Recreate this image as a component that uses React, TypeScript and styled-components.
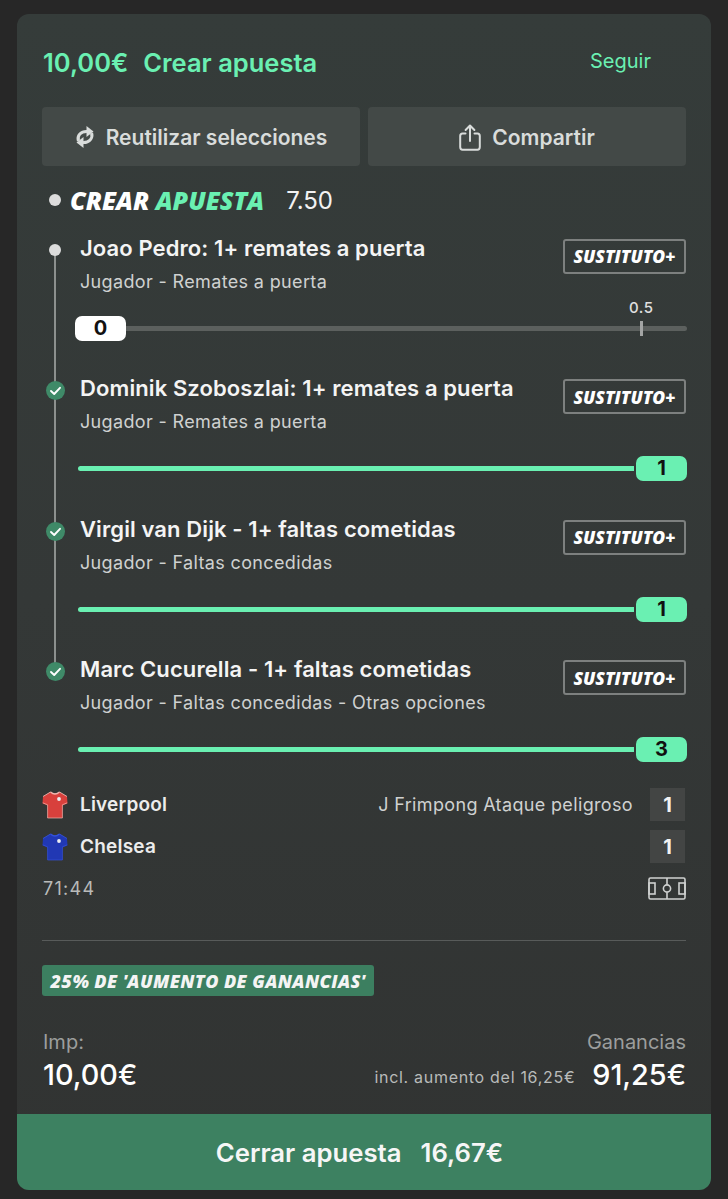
import styled, { createGlobalStyle } from 'styled-components';

const mint = '#6af0b2';
const brandFont = '"Open Sans", Lato, sans-serif';

const legs = [
  { title: 'Joao Pedro: 1+ remates a puerta', sub: 'Jugador - Remates a puerta', value: 0, pending: true },
  { title: 'Dominik Szoboszlai: 1+ remates a puerta', sub: 'Jugador - Remates a puerta', value: 1 },
  { title: 'Virgil van Dijk - 1+ faltas cometidas', sub: 'Jugador - Faltas concedidas', value: 1 },
  { title: 'Marc Cucurella - 1+ faltas cometidas', sub: 'Jugador - Faltas concedidas - Otras opciones', value: 3 },
];

const Shirt = ({ body, trim }: { body: string; trim: string }) => (
  <svg width="26" height="28" viewBox="0 0 26 28">
    <path
      d="M8.5 1 L1 5.5 L0.5 12.5 L5.5 14.5 L5.5 27 L20.5 27 L20.5 14.5 L25.5 12.5 L25 5.5 L17.5 1 Q13 3.5 8.5 1 Z"
      fill={body}
    />
    <path d="M8.5 1 Q13 5 17.5 1" fill="none" stroke={trim} strokeWidth="1.4" />
    <path d="M0.8 11.8 L5.6 13.8 M25.2 11.8 L20.4 13.8 M5.6 13.8 V27 H20.4 V13.8" fill="none" stroke={trim} strokeWidth="0.7" />
    <path d="M8.5 1 L1 5.5 M17.5 1 L25 5.5" fill="none" stroke={trim} strokeWidth="0.9" />
    <circle cx="17" cy="8" r="1.9" fill="#eceef2" />
  </svg>
);

const Check = () => (
  <svg width="19" height="19" viewBox="0 0 19 19">
    <circle cx="9.5" cy="9.5" r="9.5" fill="#3f8a68" />
    <path d="M5 10 L8.2 13 L14 6.8" fill="none" stroke="#fff" strokeWidth="1.9" strokeLinecap="round" strokeLinejoin="round" />
  </svg>
);

const SyncIcon = () => (
  <svg width="20" height="24" viewBox="0 0 20 24" fill="#d9dcdb">
    <path d="M3.4 16 C1.8 10.5 6 6.2 12 6.5" fill="none" stroke="#d9dcdb" strokeWidth="3" />
    <path d="M11.5 1 L18.5 6.6 L11.5 12 Z" />
    <g transform="rotate(180 10 12)">
      <path d="M3.4 16 C1.8 10.5 6 6.2 12 6.5" fill="none" stroke="#d9dcdb" strokeWidth="3" />
      <path d="M11.5 1 L18.5 6.6 L11.5 12 Z" />
    </g>
  </svg>
);

const ShareIcon = () => (
  <svg width="22" height="27" viewBox="0 0 22 27" fill="none" stroke="#d9dcdb" strokeWidth="2" strokeLinecap="round" strokeLinejoin="round">
    <path d="M6.5 9.5 H3.5 Q1.2 9.5 1.2 12 V23 Q1.2 25.7 3.5 25.7 H18.5 Q20.8 25.7 20.8 23 V12 Q20.8 9.5 18.5 9.5 H15.5" />
    <path d="M11 17 V1.8 M6.6 6 L11 1.5 L15.4 6" />
  </svg>
);

const PitchIcon = () => (
  <svg width="38" height="23" viewBox="0 0 38 23" fill="none" stroke="#cfd1d0" strokeWidth="1.6">
    <rect x="1" y="1" width="36" height="21" rx="1.5" />
    <path d="M19 1 V7.5 M19 15.5 V22" />
    <circle cx="19" cy="11.5" r="3.6" />
    <rect x="1" y="6" width="6" height="11" />
    <rect x="31" y="6" width="6" height="11" />
  </svg>
);

const App = () => {
  return (
    <>
      <GlobalStyle />
      <Card>
        <Header>
          <HeaderTitle>
            <span>10,00€</span>
            <span>Crear apuesta</span>
          </HeaderTitle>
          <FollowLink>Seguir</FollowLink>
        </Header>

        <ActionRow>
          <ActionButton>
            <SyncIcon />
            Reutilizar selecciones
          </ActionButton>
          <ActionButton>
            <ShareIcon />
            Compartir
          </ActionButton>
        </ActionRow>

        <BetTitleRow>
          <BetDot />
          <BetBrand>
            CREAR <em>APUESTA</em>
          </BetBrand>
          <BetOdds>7.50</BetOdds>
        </BetTitleRow>

        <LegList>
          {legs.map((leg, i) => (
            <Leg key={leg.title}>
              <Rail $first={i === 0} $last={i === legs.length - 1}>
                <RailMark>{leg.pending ? <PendingDot /> : <Check />}</RailMark>
              </Rail>
              <LegBody>
                <LegTop>
                  <div>
                    <LegTitle>{leg.title}</LegTitle>
                    <LegSub>{leg.sub}</LegSub>
                  </div>
                  <SubButton>SUSTITUTO+</SubButton>
                </LegTop>
                {leg.pending ? (
                  <Slider>
                    <WhiteThumb>{leg.value}</WhiteThumb>
                    <GreyTrack>
                      <TickLabel>0.5</TickLabel>
                      <Tick />
                    </GreyTrack>
                  </Slider>
                ) : (
                  <Slider $filled>
                    <MintTrack />
                    <MintThumb>{leg.value}</MintThumb>
                  </Slider>
                )}
              </LegBody>
            </Leg>
          ))}
        </LegList>

        <Score>
          <TeamRow>
            <Shirt body="#d8403c" trim="#eeb4ae" />
            <TeamName>Liverpool</TeamName>
            <Stat>J Frimpong Ataque peligroso</Stat>
            <ScoreBox>1</ScoreBox>
          </TeamRow>
          <TeamRow>
            <Shirt body="#2138b4" trim="#3350d8" />
            <TeamName>Chelsea</TeamName>
            <ScoreBox>1</ScoreBox>
          </TeamRow>
          <ClockRow>
            <Clock>71:44</Clock>
            <PitchIcon />
          </ClockRow>
        </Score>

        <Divider />

        <BoostBadge>25% DE 'AUMENTO DE GANANCIAS'</BoostBadge>

        <Totals>
          <div>
            <TotalLabel>Imp:</TotalLabel>
            <TotalValue>10,00€</TotalValue>
          </div>
          <TotalRight>
            <TotalLabel>Ganancias</TotalLabel>
            <TotalLine>
              <BoostNote>incl. aumento del 16,25€</BoostNote>
              <TotalValue>91,25€</TotalValue>
            </TotalLine>
          </TotalRight>
        </Totals>

        <CashOut>
          <span>Cerrar apuesta</span>
          <span>16,67€</span>
        </CashOut>
      </Card>
    </>
  );
};

export default App;

const GlobalStyle = createGlobalStyle`
  * { box-sizing: border-box; }
  html, body { margin: 0; background: #272727; }
  body {
    font-family: Inter, "Liberation Sans", sans-serif;
    padding: 14px 17px 9px;
  }
`;

const Card = styled.div`
  width: 694px;
  height: 1176px;
  padding: 0 25px;
  border-radius: 12px;
  overflow: hidden;
  background: linear-gradient(180deg, #353c3a 0%, #343837 50%, #313332 100%);
  display: flex;
  flex-direction: column;
`;

const Header = styled.div`
  height: 93px;
  padding: 32px 35px 0 1px;
  display: flex;
  justify-content: space-between;
`;

const HeaderTitle = styled.div`
  display: flex;
  gap: 15px;
  height: 32px;
  align-items: center;
  font-size: 25.5px;
  font-weight: 600;
  color: ${mint};
`;

const FollowLink = styled.div`
  height: 31px;
  line-height: 31px;
  font-size: 20px;
  color: ${mint};
`;

const ActionRow = styled.div`
  display: grid;
  grid-template-columns: 318px 318px;
  gap: 8px;
`;

const ActionButton = styled.div`
  height: 59px;
  padding-top: 2px;
  border-radius: 4px;
  background: #434947;
  color: #d9dcdb;
  font-size: 21px;
  font-weight: 600;
  display: flex;
  align-items: center;
  justify-content: center;
  gap: 11px;
`;

const BetTitleRow = styled.div`
  height: 34px;
  margin-top: 17px;
  padding-left: 7px;
  display: flex;
  align-items: center;
`;

const BetDot = styled.div`
  width: 12px;
  height: 12px;
  border-radius: 50%;
  background: #dcdcdc;
  margin-right: 9px;
`;

const BetBrand = styled.div`
  font-family: ${brandFont};
  font-style: italic;
  font-weight: 800;
  font-size: 25px;
  color: #fff;
  em {
    color: ${mint};
  }
`;

const BetOdds = styled.div`
  margin-left: 22px;
  padding-top: 2px;
  font-size: 24px;
  color: #f2f2f2;
`;

const LegList = styled.div`
  margin-top: 14px;
`;

const Leg = styled.div`
  height: 140.5px;
  display: flex;
`;

const Rail = styled.div<{ $first?: boolean; $last?: boolean }>`
  position: relative;
  flex: 0 0 26px;
  &::before {
    content: '';
    position: absolute;
    left: 12px;
    width: 2px;
    background: #8c908e;
    top: ${(p) => (p.$first ? '17px' : '0')};
    bottom: ${(p) => (p.$last ? 'auto' : '0')};
    height: ${(p) => (p.$last ? '17px' : 'auto')};
  }
`;

const RailMark = styled.div`
  position: absolute;
  left: 3.5px;
  top: 10px;
  width: 19px;
  height: 19px;
  display: flex;
  align-items: center;
  justify-content: center;
`;

const PendingDot = styled.div`
  width: 12px;
  height: 12px;
  border-radius: 50%;
  background: #dcdcdc;
`;

const LegBody = styled.div`
  flex: 1;
  padding-left: 12px;
`;

const LegTop = styled.div`
  height: 85px;
  display: flex;
  justify-content: space-between;
  align-items: flex-start;
`;

const LegTitle = styled.div`
  font-size: 22px;
  font-weight: 600;
  letter-spacing: 0.1px;
  line-height: 34px;
  color: #f4f4f4;
`;

const LegSub = styled.div`
  font-size: 18px;
  line-height: 34px;
  letter-spacing: 0.35px;
  color: #cfd1d0;
`;

const SubButton = styled.div`
  width: 123px;
  height: 35px;
  margin-top: 8px;
  border: 2px solid #7d807f;
  border-radius: 3px;
  display: flex;
  align-items: center;
  justify-content: center;
  font-family: ${brandFont};
  font-style: italic;
  font-weight: 800;
  font-size: 17.5px;
  color: #fff;
`;

const Slider = styled.div<{ $filled?: boolean }>`
  height: 25px;
  margin: 0 -1px 0 ${(p) => (p.$filled ? '-2px' : '-5px')};
  display: flex;
  align-items: center;
`;

const WhiteThumb = styled.div`
  width: 51px;
  height: 25px;
  border-radius: 7px;
  background: #fff;
  color: #111;
  font-size: 20px;
  font-weight: 700;
  text-align: center;
  line-height: 25px;
`;

const GreyTrack = styled.div`
  position: relative;
  flex: 1;
  height: 5px;
  border-radius: 0 3px 3px 0;
  background: #5c605e;
`;

const Tick = styled.div`
  position: absolute;
  left: 514px;
  top: -5px;
  width: 3px;
  height: 15px;
  background: #a3a5a4;
`;

const TickLabel = styled.div`
  position: absolute;
  left: 503px;
  top: -28px;
  font-size: 15px;
  font-weight: 500;
  letter-spacing: 0.5px;
  color: #e0e0e0;
`;

const MintTrack = styled.div`
  flex: 1;
  height: 5px;
  margin-right: 2px;
  border-radius: 3px 0 0 3px;
  background: ${mint};
`;

const MintThumb = styled.div`
  width: 51px;
  height: 25px;
  border-radius: 7px;
  background: ${mint};
  color: #111;
  font-size: 20px;
  font-weight: 700;
  text-align: center;
  line-height: 25px;
`;

const Score = styled.div`
  margin-top: -9px;
  display: flex;
  flex-direction: column;
`;

const TeamRow = styled.div`
  height: 42px;
  display: flex;
  align-items: center;
  gap: 12px;
  padding-right: 1px;
`;

const TeamName = styled.div`
  flex: 1;
  font-size: 19px;
  font-weight: 600;
  letter-spacing: 0.2px;
  color: #ececec;
`;

const Stat = styled.div`
  font-size: 18px;
  letter-spacing: 0.35px;
  color: #cfd1d0;
  margin-right: 5px;
`;

const ScoreBox = styled.div`
  width: 35px;
  height: 33px;
  background: #434544;
  color: #f2f2f2;
  font-size: 20px;
  font-weight: 700;
  display: flex;
  align-items: center;
  justify-content: center;
`;

const ClockRow = styled.div`
  height: 42px;
  display: flex;
  align-items: center;
  justify-content: space-between;
`;

const Clock = styled.div`
  font-size: 18px;
  letter-spacing: 1.3px;
  color: #b9bbba;
  margin-left: 1px;
`;

const Divider = styled.div`
  height: 1px;
  margin-top: 30px;
  background: #585b5a;
`;

const BoostBadge = styled.div`
  align-self: flex-start;
  width: 332px;
  height: 32px;
  margin-top: 24px;
  border-radius: 3px;
  background: #3c7f60;
  color: #f4f4f4;
  font-family: ${brandFont};
  font-style: italic;
  font-weight: 800;
  font-size: 18px;
  letter-spacing: 0.4px;
  display: flex;
  align-items: center;
  justify-content: center;
  white-space: nowrap;
`;

const Totals = styled.div`
  height: 118px;
  padding-top: 32px;
  display: flex;
  justify-content: space-between;
  margin-left: 1px;
`;

const TotalLabel = styled.div`
  font-size: 20px;
  line-height: 28px;
  color: #9c9e9d;
`;

const TotalValue = styled.div`
  font-size: 28.8px;
  font-weight: 500;
  line-height: 36px;
  margin-top: 1px;
  color: #fff;
`;

const TotalRight = styled.div`
  display: flex;
  flex-direction: column;
  align-items: flex-end;
`;

const TotalLine = styled.div`
  display: flex;
  align-items: center;
  gap: 17px;
`;

const BoostNote = styled.div`
  font-size: 16px;
  letter-spacing: 0.7px;
  margin-top: 5px;
  color: #b9bbba;
`;

const CashOut = styled.div`
  height: 76px;
  margin: 0 -25px;
  padding-right: 9px;
  background: #3d8161;
  color: #f6f6f6;
  font-size: 25.7px;
  font-weight: 600;
  display: flex;
  align-items: center;
  justify-content: center;
  gap: 19px;
  flex-shrink: 0;
`;
